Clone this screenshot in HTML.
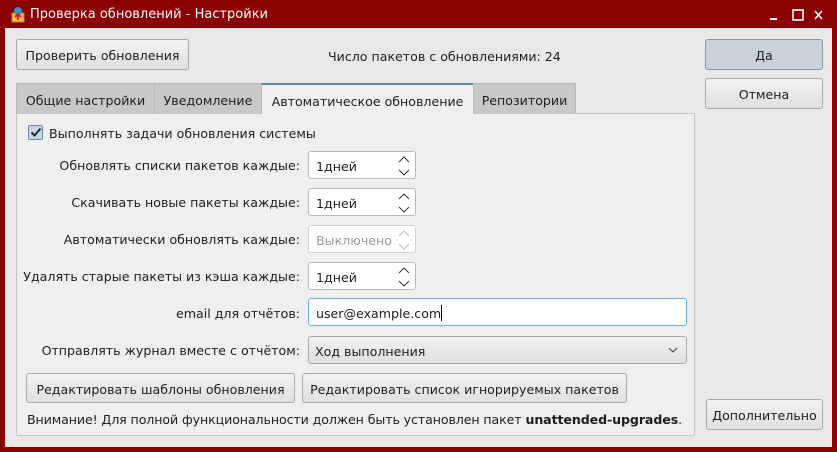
<!DOCTYPE html>
<html><head><meta charset="utf-8"><style>
*{box-sizing:border-box;margin:0;padding:0}
body{width:837px;height:452px;background:#8b0000;font-family:"DejaVu Sans","Liberation Sans",sans-serif;font-size:12.6px;color:#1e1e1e;position:relative;overflow:hidden}
.a{position:absolute}
.title{left:30px;top:7px;color:#fff;font-size:13px}
.content{left:5px;top:28px;width:827px;height:419px;background:#e8e8e8}
.btn{position:absolute;border:1px solid #a8a8a8;border-radius:3px;background:linear-gradient(#f2f2f2,#e0e0e0);display:flex;align-items:center;justify-content:center;white-space:nowrap;padding-top:2px}
.tab{position:absolute;top:83px;height:31px;background:#c8c8c8;border:1px solid #b8b8b8;display:flex;align-items:center;justify-content:center;padding-top:3px}
.panel{left:16px;top:113px;width:679px;height:323px;background:#efefef;border:1px solid #c4c4c4;border-radius:2px}
.lbl{position:absolute;right:537px;text-align:right;white-space:nowrap}
.spin{position:absolute;left:308px;width:108px;height:28px;background:#fff;border:1px solid #b8b8b8;border-radius:3px;padding-left:7px;padding-top:2px;display:flex;align-items:center}
.spin svg{position:absolute;right:5px;top:4px}
</style></head><body>
<svg class="a" style="left:10px;top:6px" width="16" height="17" viewBox="0 0 16 17"><rect x="2" y="7" width="12" height="9" fill="#f0c040" stroke="#c08020"/><circle cx="8" cy="5" r="4" fill="#3a8fcf"/><path d="M8 8v6M5 11l3-3 3 3" stroke="#e02020" stroke-width="2" fill="none"/></svg>
<div class="a title">Проверка обновлений - Настройки</div>
<svg class="a" style="left:765px;top:9px" width="60" height="12"><rect x="5" y="9" width="7" height="2" fill="#fff"/><rect x="28" y="1" width="10" height="10" fill="none" stroke="#fff" stroke-width="1.6"/><path d="M50 2l7 8M57 2l-7 8" stroke="#fff" stroke-width="1.6"/></svg>
<div class="a content"></div>
<div class="btn" style="left:16px;top:39px;width:173px;height:31px">Проверить обновления</div>
<div class="a" style="left:328px;top:49px">Число пакетов с обновлениями: 24</div>
<div class="btn" style="left:705px;top:39px;width:118px;height:31px;background:#c9d1da;border-color:#8a98a8">Да</div>
<div class="btn" style="left:705px;top:78px;width:118px;height:31px">Отмена</div>
<div class="tab" style="left:16px;width:139px">Общие настройки</div>
<div class="tab" style="left:154px;width:108px">Уведомление</div>
<div class="tab" style="left:261px;width:213px;background:#efefef;border-top:2px solid #5a84a8;border-bottom:none;height:32px">Автоматическое обновление</div>
<div class="tab" style="left:473px;width:103px">Репозитории</div>
<div class="a panel"></div>
<div class="tab" style="left:262px;width:211px;top:112px;height:3px;background:#efefef;border:none"></div>
<div class="a" style="left:28px;top:125px;width:15px;height:15px;border:1px solid #6a8aa8;border-radius:2px;background:#c9d5e2"></div>
<svg class="a" style="left:30px;top:127px" width="12" height="11"><path d="M1.5 5.5l3 3 6-7" stroke="#1e2a3a" stroke-width="2" fill="none"/></svg>
<div class="a" style="left:49px;top:126px">Выполнять задачи обновления системы</div>
<div class="lbl" style="top:158px">Обновлять списки пакетов каждые:</div>
<div class="lbl" style="top:195px">Скачивать новые пакеты каждые:</div>
<div class="lbl" style="top:232px">Автоматически обновлять каждые:</div>
<div class="lbl" style="top:269px">Удалять старые пакеты из кэша каждые:</div>
<div class="lbl" style="top:306px">email для отчётов:</div>
<div class="lbl" style="top:343px">Отправлять журнал вместе с отчётом:</div>
<div class="spin" style="top:151px">1дней<svg width="12" height="20"><path d="M1 6l5-5 5 5M1 14l5 5 5-5" stroke="#333" fill="none"/></svg></div>
<div class="spin" style="top:188px">1дней<svg width="12" height="20"><path d="M1 6l5-5 5 5M1 14l5 5 5-5" stroke="#333" fill="none"/></svg></div>
<div class="spin" style="top:225px;color:#999;border-color:#d0d0d0">Выключено<svg width="12" height="20"><path d="M1 6l5-5 5 5M1 14l5 5 5-5" stroke="#bbb" fill="none"/></svg></div>
<div class="spin" style="top:262px">1дней<svg width="12" height="20"><path d="M1 6l5-5 5 5M1 14l5 5 5-5" stroke="#333" fill="none"/></svg></div>
<div class="spin" style="top:298px;width:379px;border-color:#6aaee0">user@example.com<span style="display:inline-block;width:1px;height:16px;background:#000"></span></div>
<div class="btn" style="left:308px;top:336px;width:379px;height:28px;justify-content:flex-start;padding-left:6px">Ход выполнения<svg style="position:absolute;right:8px;top:10px" width="10" height="7"><path d="M1 1l4 4 4-4" stroke="#444" fill="none"/></svg></div>
<div class="btn" style="left:26px;top:373px;width:269px;height:30px">Редактировать шаблоны обновления</div>
<div class="btn" style="left:302px;top:373px;width:325px;height:30px">Редактировать список игнорируемых пакетов</div>
<div class="a" style="left:27px;top:412px;letter-spacing:-0.1px">Внимание! Для полной функциональности должен быть установлен пакет <b>unattended-upgrades</b>.</div>
<div class="btn" style="left:706px;top:399px;width:117px;height:31px">Дополнительно</div>
</body></html>
